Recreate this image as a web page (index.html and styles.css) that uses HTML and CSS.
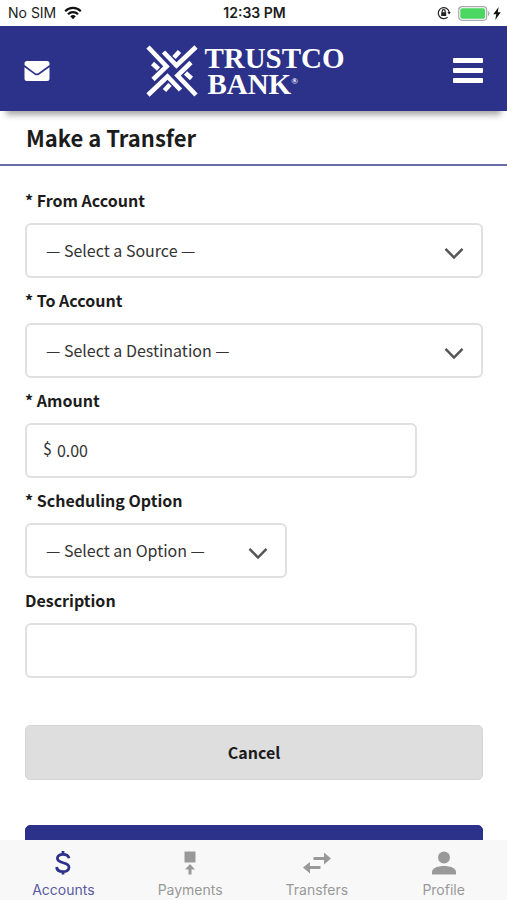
FILE: index.html
```html
<!DOCTYPE html>
<html lang="en">
<head>
<meta charset="utf-8">
<meta name="viewport" content="width=device-width, initial-scale=1">
<title>Make a Transfer</title>
<link rel="stylesheet" href="styles.css">
</head>
<body>
<div class="status">
  <div class="status-side">
    <span>No SIM</span>
    <svg width="18" height="14" viewBox="0 0 18 14" fill="none" stroke="#111" stroke-width="2.2"><path d="M1.2 5.2a11 11 0 0 1 15.600 0M4 8.300a7 7 0 0 1 10 0"/><path d="M9 13.200 6.200 10.300a4 4 0 0 1 5.600 0z" fill="#111" stroke="none"/></svg>
  </div>
  <span class="clock">12:33 PM</span>
  <div class="status-side status-right">
    <svg width="14" height="14" viewBox="0 0 14 14" fill="none" stroke="#222" stroke-width="1.200"><path d="M10.600 11.100A5.500 5.500 0 1 1 12.200 6"/><path d="M10.400 6h3.400l-1.700 2.400z" fill="#222" stroke="none"/><rect x="4.200" y="6.200" width="5" height="3.800" fill="#222" stroke="none"/><path d="M5.200 6.500V5.200a1.500 1.500 0 0 1 3 0v1.300"/></svg>
    <svg width="32" height="15" viewBox="0 0 32 15"><rect x=".7" y=".7" width="28" height="13.600" rx="3.500" fill="#fff" stroke="#aaa" stroke-width="1.200"/><rect x="2.300" y="2.300" width="24.800" height="10.400" rx="2" fill="#4cd662"/><path d="M30 5c2 .8 2 4.200 0 5z" fill="#aaa"/></svg>
    <svg width="8" height="13" viewBox="0 0 8 13"><path d="M5.600 0 .3 7.200h3L2.200 13 7.800 5.300h-3z" fill="#111"/></svg>
  </div>
</div>
<header class="header">
  <button class="icon-button" type="button" aria-label="Messages">
    <svg width="26" height="20" viewBox="0 0 26 20" fill="#fff"><path d="M3 0h20a2.500 2.500 0 0 1 2.500 2.500V4L14.500 12q-1.700 1.200-3.400 0L.5 4V2.500A2.500 2.500 0 0 1 3 0z"/><path d="M.5 6.200 10.500 13.500q2.400 1.700 4.800 0L25.500 6.200V17.500A2.500 2.500 0 0 1 23 20H3A2.500 2.500 0 0 1 .5 17.500z"/></svg>
  </button>
  <a class="logo" href="#" aria-label="Trustco Bank">
    <svg width="52" height="52" viewBox="0 0 52 52" fill="none" stroke="#fff" stroke-width="4.600">
      <defs><g id="arm"><path d="M2 2 20.500 21.500 7 34.500"/><path d="M6.500 18.500 12.500 24"/></g></defs>
      <use href="#arm"/><use href="#arm" transform="rotate(90 26 26)"/><use href="#arm" transform="rotate(180 26 26)"/><use href="#arm" transform="rotate(270 26 26)"/>
    </svg>
    <span class="wordmark"><span>TRUSTCO</span><span class="second">BANK<sup>®</sup></span></span>
  </a>
  <button class="icon-button" type="button" aria-label="Menu">
    <svg width="30" height="26" viewBox="0 0 30 26" fill="#fff"><rect y="0" width="30" height="5" rx="1"/><rect y="10" width="30" height="5" rx="1"/><rect y="20" width="30" height="5" rx="1"/></svg>
  </button>
</header>
<main class="content">
  <h1>Make a Transfer</h1>
  <form class="form">
    <label for="from">* From Account</label>
    <div class="field select-field">
      <select id="from"><option>— Select a Source —</option></select>
      <svg class="chevron" width="20" height="13" viewBox="0 0 20 13"><path d="M1.500 1.800 10 10.500l8.500-8.700"/></svg>
    </div>
    <label for="to">* To Account</label>
    <div class="field select-field">
      <select id="to"><option>— Select a Destination —</option></select>
      <svg class="chevron" width="20" height="13" viewBox="0 0 20 13"><path d="M1.500 1.800 10 10.500l8.500-8.700"/></svg>
    </div>
    <label for="amount">* Amount</label>
    <div class="field medium amount">
      <span class="currency">$</span>
      <input id="amount" type="text" value="0.00">
    </div>
    <label for="schedule">* Scheduling Option</label>
    <div class="field select-field short">
      <select id="schedule"><option>— Select an Option —</option></select>
      <svg class="chevron" width="20" height="13" viewBox="0 0 20 13"><path d="M1.500 1.800 10 10.500l8.500-8.700"/></svg>
    </div>
    <label for="description">Description</label>
    <div class="field medium"><input id="description" type="text"></div>
    <div class="actions">
      <button class="button" type="button">Cancel</button>
      <button class="button primary" type="submit" aria-label="Continue"></button>
    </div>
  </form>
</main>
<nav class="tabs">
  <a class="tab active" href="#">
    <svg width="28" height="26" viewBox="0 0 28 26" fill="none" stroke="currentColor" stroke-width="2.800"><path d="M20 8.300C19.500 5.500 17 4.300 14 4.300c-3.200 0-5.600 1.600-5.600 4.200 0 5.600 11.600 2.900 11.600 8.700 0 2.800-2.600 4.500-6 4.500-3.500 0-6.100-1.500-6.400-4.700M14 1v4M14 21v3.500"/></svg>
    <span>Accounts</span>
  </a>
  <a class="tab" href="#">
    <svg width="28" height="26" viewBox="0 0 28 26" fill="currentColor"><path d="M8.500 1.500h11v11h-11zM14 14l5 5.500h-3.500v5h-3v-5H9z"/></svg>
    <span>Payments</span>
  </a>
  <a class="tab" href="#">
    <svg width="28" height="26" viewBox="0 0 28 26" fill="currentColor"><path d="M10.500 7h10.500V2.500L28 8.500l-7 6V10H10.500zM17.500 16H7v-4l-7 5.500L7 23.500V19h10.500z"/></svg>
    <span>Transfers</span>
  </a>
  <a class="tab" href="#">
    <svg width="28" height="26" viewBox="0 0 28 26" fill="currentColor"><circle cx="14" cy="7.500" r="6"/><path d="M2 24.500v-2.500c0-4 6-6 12-6s12 2 12 6v2.500z"/></svg>
    <span>Profile</span>
  </a>
</nav>
</body>
</html>
```
FILE: styles.css
```css
* { box-sizing: border-box; }

body {
  margin: 0;
  height: 100vh;
  display: flex;
  flex-direction: column;
  overflow: hidden;
  background: #fff;
  color: #1c1c1c;
  font-family: "Noto Sans CJK SC", "Noto Sans", sans-serif;
  font-size: 16px;
}

button, input, select { font: inherit; color: inherit; }

.status {
  flex: none;
  height: 26px;
  padding: 0 6px 0 8px;
  display: grid;
  grid-template-columns: 1fr auto 1fr;
  align-items: center;
  font: 14px/26px Inter, sans-serif;
}

.status-side { display: flex; align-items: center; gap: 8px; }
.status-right { justify-content: flex-end; gap: 7px; }
.status-right svg:last-child { margin-left: -4px; }
.clock { font-weight: 600; }

.header {
  flex: none;
  position: relative;
  z-index: 1;
  height: 85px;
  padding: 4px 24px 0;
  display: flex;
  align-items: center;
  justify-content: space-between;
  background: #2c3189;
  box-shadow: 0 10px 6px -6px #aaa;
}

.icon-button { display: flex; padding: 0; border: 0; background: none; }

.logo {
  display: flex;
  align-items: center;
  gap: 6px;
  margin-right: 12px;
  color: #fff;
  text-decoration: none;
}

.wordmark {
  display: flex;
  flex-direction: column;
  font: bold 29px/26px "Liberation Serif", serif;
}

.second { padding-left: 3px; }
.wordmark sup { font-size: 9px; line-height: 9px; vertical-align: 10px; }

.content { flex: 1; min-height: 0; overflow: hidden; }

h1 {
  margin: 0;
  padding: 0 26px;
  border-bottom: 2px solid #6c6caa;
  font-size: 22px;
  line-height: 53px;
}

.form { padding: 12px 24px 0 25px; }
label { display: block; font-weight: bold; line-height: 45px; }

.field {
  position: relative;
  display: flex;
  align-items: center;
  height: 55px;
  border: 2px solid #e0e0e0;
  border-radius: 6px;
  color: #333;
}

.medium { max-width: 392px; }
.short { max-width: 262px; }

.field select, .field input {
  flex: 1;
  min-width: 0;
  height: 51px;
  padding: 0 19px 2px;
  border: 0;
  outline: 0;
  background: none;
  appearance: none;
}

.chevron {
  position: absolute;
  right: 17px;
  top: 22px;
  pointer-events: none;
  fill: none;
  stroke: #555;
  stroke-width: 2.5px;
}

.amount { padding-left: 16px; }
.field.amount input { padding: 0 5px 2px; }
.currency { line-height: 24px; padding-bottom: 6px; }

.actions { display: grid; gap: 45px; margin-top: 47px; }

.button {
  height: 55px;
  padding: 0 0 2px;
  border: 1px solid #d5d5d5;
  border-radius: 5px;
  background: #dedede;
  font-weight: bold;
}

.primary { border-color: #2c3189; background: #2c3189; color: #fff; }

.tabs {
  flex: none;
  height: 60px;
  display: grid;
  grid-template-columns: repeat(4, 1fr);
  background: #f8f8f8;
}

.tab {
  display: flex;
  flex-direction: column;
  align-items: center;
  padding-top: 10px;
  color: #999;
  font: 14px/28px Inter, sans-serif;
  text-decoration: none;
}

.active { color: #2c3189; }
.active span { color: #5a5aa3; }
```
